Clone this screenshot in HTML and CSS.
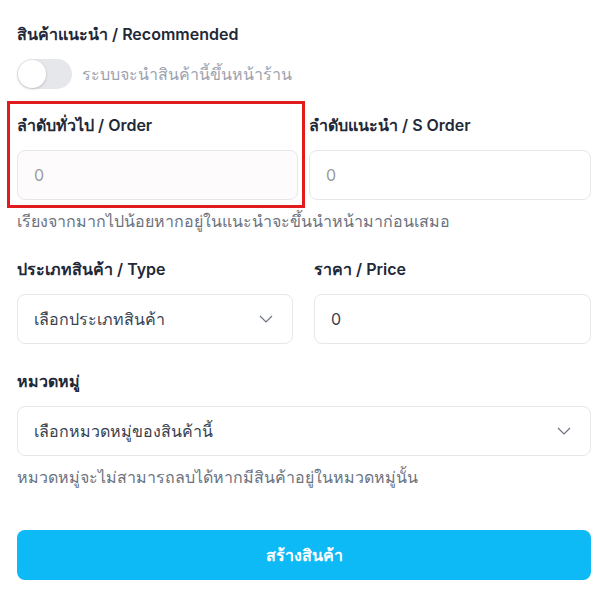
FILE: index.html
```html
<!DOCTYPE html>
<html lang="th">
<head>
<meta charset="utf-8">
<title>สร้างสินค้า</title>
<link rel="stylesheet" href="styles.css">
</head>
<body>
<form class="form">
  <div class="field">
    <div class="label">สินค้าแนะนำ / Recommended</div>
    <div class="toggle-row">
      <span class="toggle"><span class="knob"></span></span>
      <span class="toggle-text">ระบบจะนำสินค้านี้ขึ้นหน้าร้าน</span>
    </div>
  </div>

  <div class="grid grid-order">
    <div class="field highlight-wrap">
      <div class="label">ลำดับทั่วไป / Order</div>
      <div class="input input-tint placeholder">0</div>
      <span class="highlight"></span>
    </div>
    <div class="field">
      <div class="label">ลำดับแนะนำ / S Order</div>
      <div class="input placeholder">0</div>
    </div>
  </div>
  <div class="hint">เรียงจากมากไปน้อยหากอยู่ในแนะนำจะขึ้นนำหน้ามาก่อนเสมอ</div>

  <div class="grid grid-type">
    <div class="field">
      <div class="label">ประเภทสินค้า / Type</div>
      <div class="input select">
        <span>เลือกประเภทสินค้า</span>
        <svg class="chev" width="14" height="8" viewBox="0 0 14 8"><path d="M1 1l6 6 6-6" fill="none" stroke="#6b7280" stroke-width="1.2"/></svg>
      </div>
    </div>
    <div class="field">
      <div class="label">ราคา / Price</div>
      <div class="input value">0</div>
    </div>
  </div>

  <div class="field field-cat">
    <div class="label">หมวดหมู่</div>
    <div class="input select">
      <span>เลือกหมวดหมู่ของสินค้านี้</span>
      <svg class="chev" width="14" height="8" viewBox="0 0 14 8"><path d="M1 1l6 6 6-6" fill="none" stroke="#6b7280" stroke-width="1.2"/></svg>
    </div>
  </div>
  <div class="hint">หมวดหมู่จะไม่สามารถลบได้หากมีสินค้าอยู่ในหมวดหมู่นั้น</div>

  <button type="button" class="submit">สร้างสินค้า</button>
</form>
</body>
</html>
```

FILE: styles.css
```css
* { box-sizing: border-box; }
html, body { margin: 0; padding: 0; background: #ffffff; }
body {
  font-family: Inter, "Noto Sans", "DejaVu Sans", sans-serif;
  font-size: 16px;
  line-height: 24px;
  color: #1f2937;
}
.form {
  width: 591px;
  padding: 22px 0 0 17px;
  display: flex;
  flex-direction: column;
}
.field { display: flex; flex-direction: column; }
.label {
  font-weight: 600;
  color: #1f2937;
  margin-bottom: 13px;
}
.toggle-row {
  display: flex;
  align-items: center;
  gap: 10px;
}
.toggle {
  position: relative;
  width: 55px;
  height: 30px;
  border-radius: 15px;
  background: #e5e7eb;
  flex: none;
}
.knob {
  position: absolute;
  left: 1px;
  top: 1px;
  width: 28px;
  height: 28px;
  border-radius: 50%;
  background: #ffffff;
  box-shadow: 0 1px 3px rgba(0,0,0,0.18);
}
.toggle-text { color: #9ca3af; }
.grid { display: grid; }
.grid-order {
  grid-template-columns: 281px 282px;
  column-gap: 11px;
  margin-top: 24px;
}
.grid-type {
  grid-template-columns: 276px 277px;
  column-gap: 21px;
  margin-top: 24px;
}
.input {
  height: 50px;
  border: 1px solid #e5e7eb;
  border-radius: 8px;
  background: #ffffff;
  padding: 0 16px;
  display: flex;
  align-items: center;
}
.input-tint { background: #fefbfd; }
.placeholder { color: #9b9b9b; }
.value { color: #374151; }
.select { justify-content: space-between; color: #374151; padding-right: 19px; }
.chev { flex: none; }
.hint { color: #6b7280; margin-top: 9px; }
.field-cat { margin-top: 25px; }
.highlight-wrap { position: relative; }
.highlight {
  position: absolute;
  left: -10px;
  right: -7px;
  top: -12px;
  bottom: -8px;
  border: 3px solid #e21b1f;
  pointer-events: none;
}
.submit {
  margin-top: 41px;
  height: 50px;
  width: 574px;
  border: none;
  border-radius: 8px;
  background: #0dbaf5;
  color: #ffffff;
  font-family: inherit;
  font-size: 16px;
  font-weight: 600;
}
```
